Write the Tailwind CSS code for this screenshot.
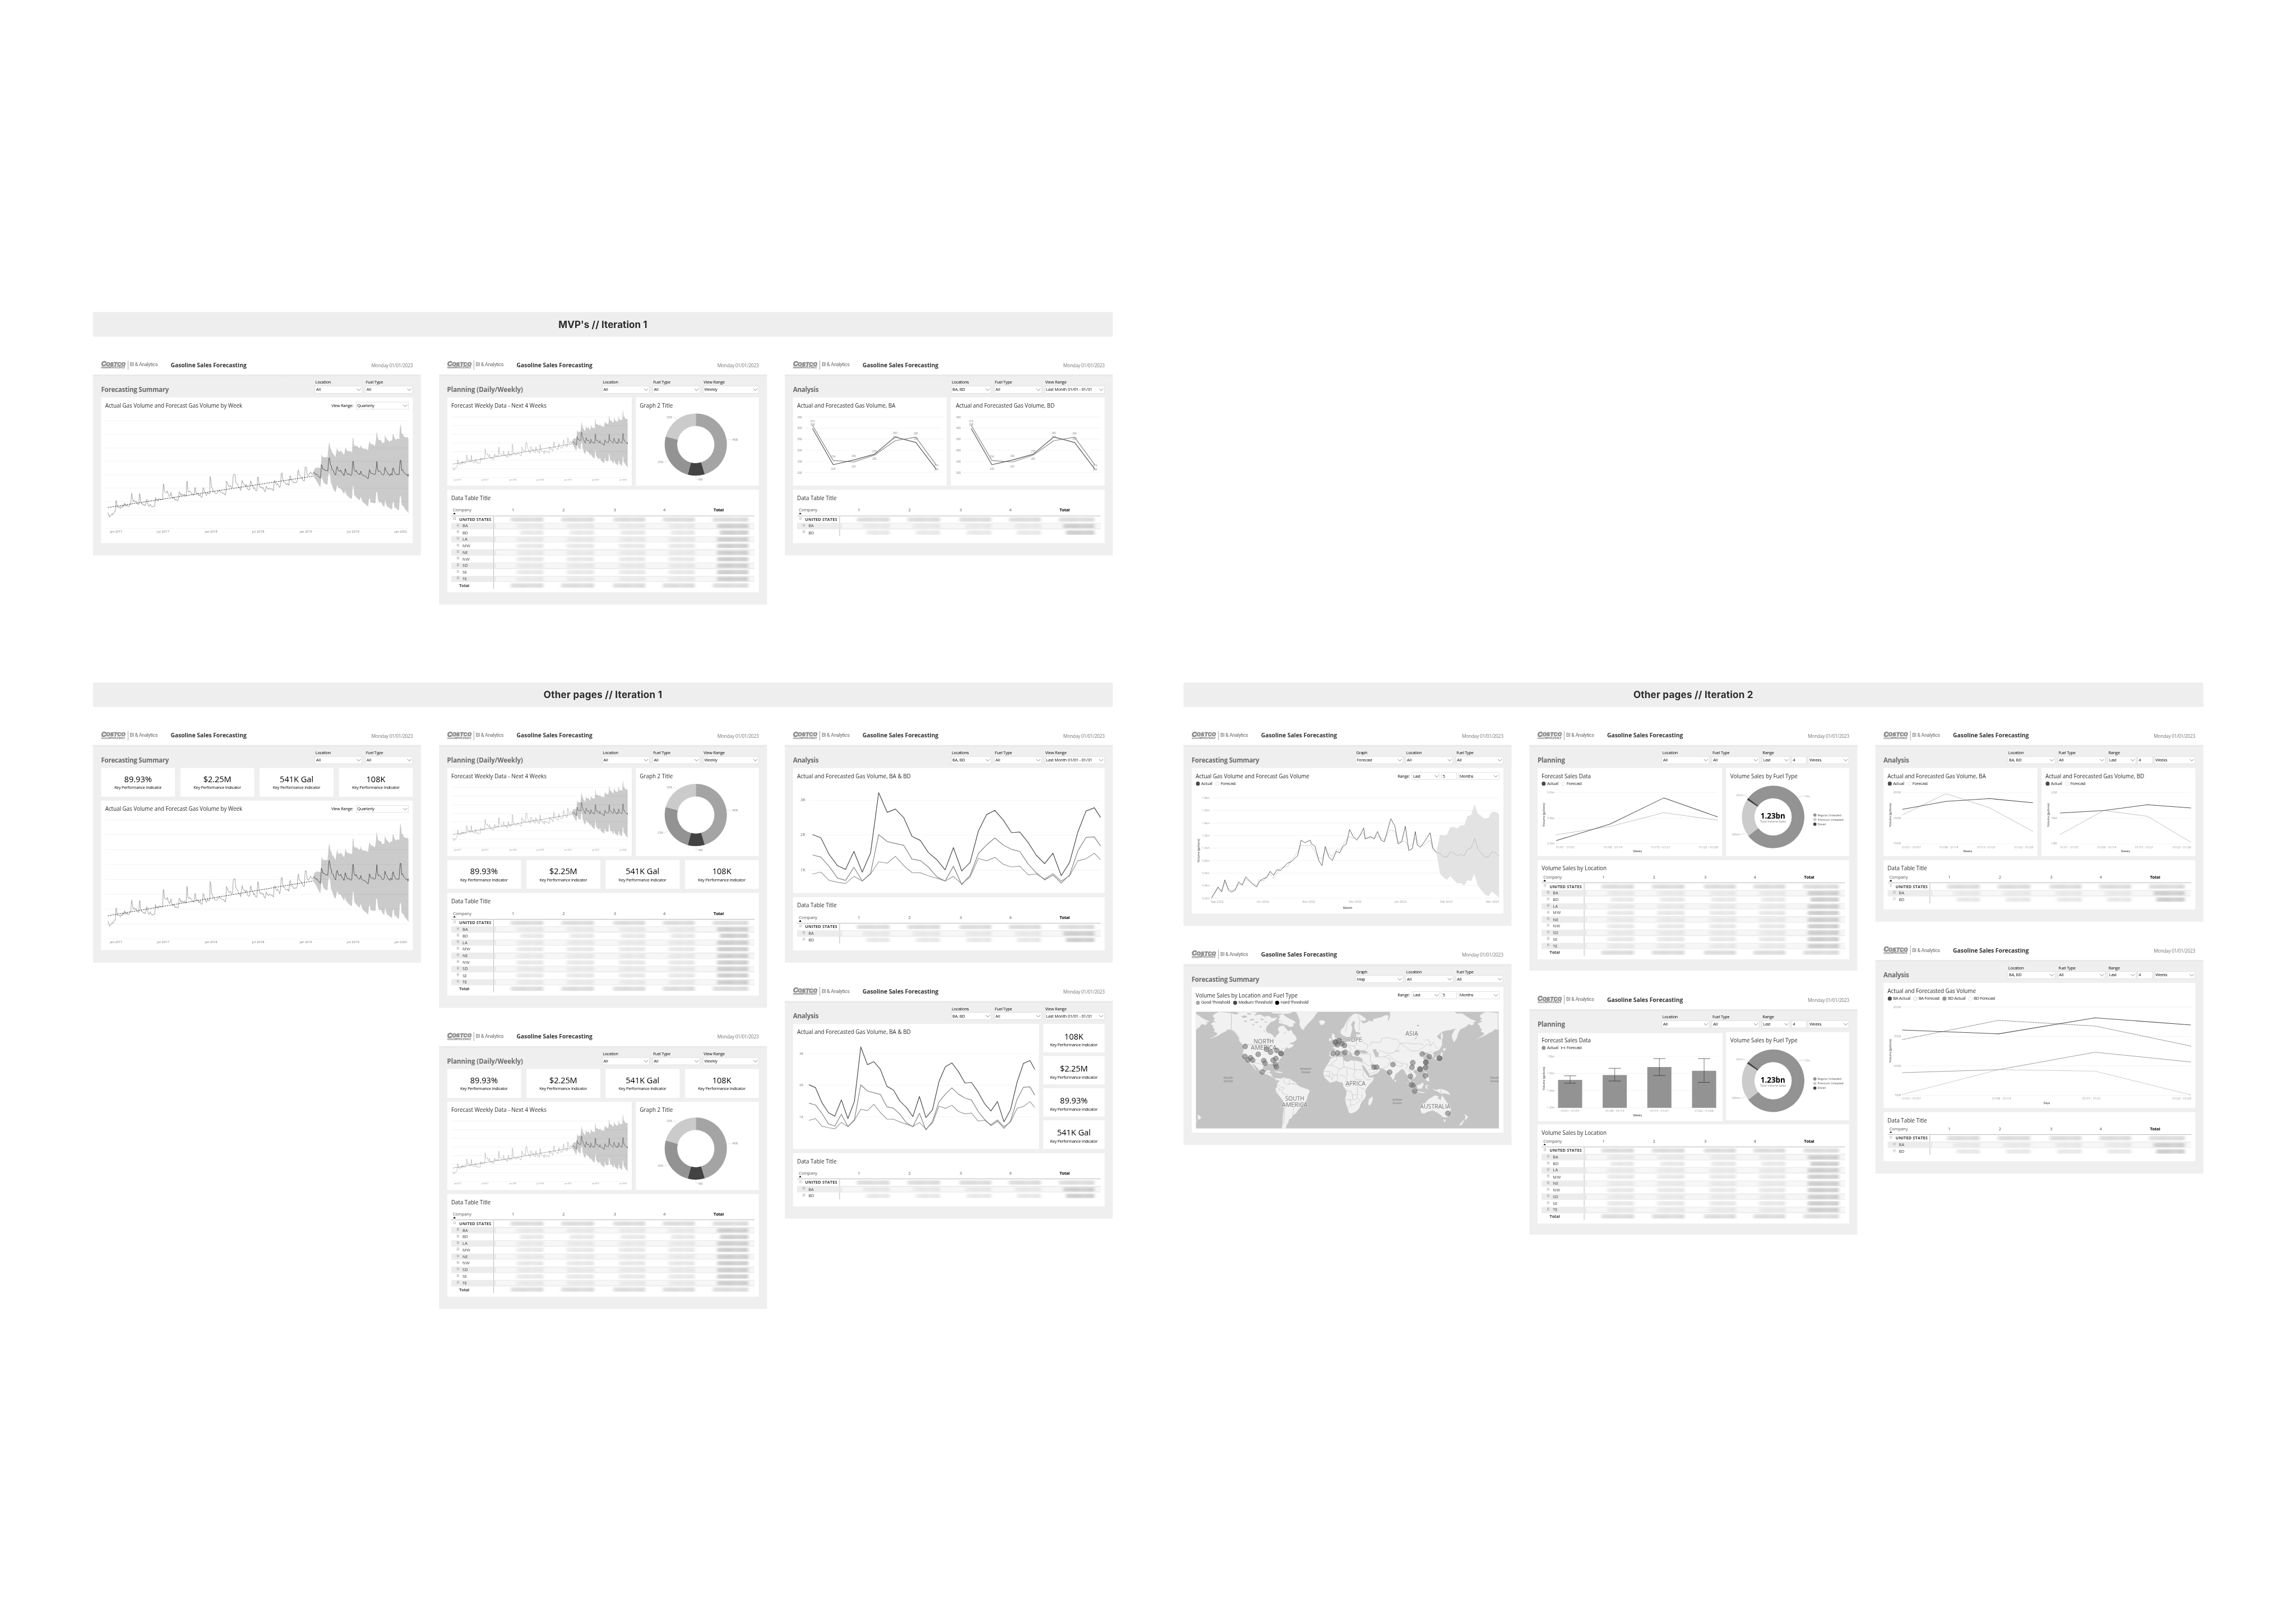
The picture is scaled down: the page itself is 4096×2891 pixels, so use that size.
<!DOCTYPE html>
<html lang="en">
<head>
<meta charset="utf-8">
<title>Gasoline Sales Forecasting – page iterations</title>
<script src="https://cdn.jsdelivr.net/npm/@tailwindcss/browser@4"></script>
</head>
<body class="bg-white">
<div class="w-[4096px] h-[2891px] overflow-hidden bg-white">
  <main id="board" class="w-[6720px] h-[4743px] origin-top-left scale-[0.609524] bg-white pt-[913px] pl-[272px] font-['Open_Sans','Noto_Sans',sans-serif] text-black"></main>
</div>
<script>
// Set widths (px) of the strings used across the pages
const W = {
  'BI & Analytics': 81.3, 'Gasoline Sales Forecasting': 222, 'Monday 01/01/2023': 121,
  'Forecasting Summary': 198, 'Planning (Daily/Weekly)': 222, 'Analysis': 74.5, 'Planning': 80,
  'Location': 45, 'Locations': 50, 'Fuel Type': 50, 'View Range': 62, 'Graph': 32, 'Range': 33.5, 'Range:': 35.6, 'View Range:': 64,
  'All': 13.5, 'Weekly': 38, 'Quarterly': 50, 'BA, BD': 36.5, 'Last Month 01/01 - 01/31': 135, 'Forecast': 44, 'Map': 24, 'Last': 21, 'Months': 40.5, 'Weeks': 34.5,
  'Actual Gas Volume and Forecast Gas Volume by Week': 401, 'Forecast Weekly Data - Next 4 Weeks': 279, 'Graph 2 Title': 96.5, 'Data Table Title': 115.5,
  'Actual and Forecasted Gas Volume, BA': 287.5, 'Actual and Forecasted Gas Volume, BD': 289, 'Actual and Forecasted Gas Volume, BA & BD': 332.5,
  'Actual Gas Volume and Forecast Gas Volume': 332.5, 'Volume Sales by Location and Fuel Type': 298.5, 'Forecast Sales Data': 144,
  'Volume Sales by Fuel Type': 197, 'Volume Sales by Location': 190, 'Actual and Forecasted Gas Volume': 258.5,
  '108K': 55.5, '$2.25M': 81.5, '89.93%': 81, '541K Gal': 98.5, 'Key Performance Indicator': 139,
  'Actual': 32.5, 'Good Threshold': 84.5, 'Medium Threshold': 99, 'Hard Threshold': 81, 'BA Actual': 50.5, 'BA Forecast': 61, 'BD Actual': 51, 'BD Forecast': 62.5,
  'Company': 54, 'UNITED STATES': 94, 'Total': 29.5, 'BA': 16, 'BD': 16, 'LA': 15, 'MW': 23.5, 'NE': 16, 'NW': 21.5, 'SD': 16, 'SE': 13.5, 'TE': 13.5,
  'Other pages // Iteration 1': 347, 'Other pages // Iteration 2': 351, "MVP's // Iteration 1": 260
};
const esc = s => s.replace(/&/g, '&amp;');
const t = (s, cls = '') => `<span class="inline-block whitespace-nowrap ${cls}" ${W[s] ? `data-w="${W[s]}"` : ''}>${esc(s)}</span>`;

/* ---------- header ---------- */
const logo = `<svg width="72" height="22" viewBox="0 0 72 22" class="overflow-visible fill-[#8c8c8c] font-['Inter'] font-black italic">
  <text x="0" y="14.2" font-size="18.5" textLength="15" lengthAdjust="spacingAndGlyphs" stroke="#8c8c8c" stroke-width=".8">C</text>
  <text x="14" y="13.8" font-size="14.5" textLength="57" lengthAdjust="spacingAndGlyphs" stroke="#8c8c8c" stroke-width=".8">OSTCO</text>
  <path d="M0 15.4H23.5V16.6H0zM0 17.6H22.7V18.8H0zM0 19.8H22V21H0z"/>
  <text x="22" y="21" font-size="7.2" textLength="48" lengthAdjust="spacingAndGlyphs">WHOLESALE</text></svg>`;
const header = `<header class="flex h-[56px] items-center pl-[24px] pr-[24px]">${logo}
  <div class="ml-[6px] h-[27px] w-px bg-[#666]"></div>
  <div class="ml-[5px] w-[119.5px] font-['Roboto'] text-[14.5px] text-[#666]">${t('BI & Analytics')}</div>
  <div class="text-[17px] font-bold text-[#333]">${t('Gasoline Sales Forecasting')}</div>
  <div class="ml-auto pt-[2px] text-[14px] text-[#7a7a7a]">${t('Monday 01/01/2023')}</div></header>`;

/* ---------- form controls ---------- */
const chev = `<svg width="14" height="8" viewBox="0 0 14 8" class="ml-auto mr-[2px] shrink-0 fill-none stroke-[#333]"><path d="M1 1 7 7 13 1"/></svg>`;
const WD = { 139: 'w-[139px]', 117: 'w-[117.5px]', 163: 'w-[163px]', 175: 'w-[175.5px]', 82: 'w-[82.5px]', 45: 'w-[45px]', 120: 'w-[120px]', 154: 'w-[154.5px]' };
const sel = (v, w, arrow = true) => `<div class="flex h-[22px] items-center border border-[#cfcfcf] bg-white pl-[3px] text-[12px] ${WD[w]}">${t(v)}${arrow ? chev : ''}</div>`;
const field = (label, box) => `<div class="flex flex-col"><div class="h-[21px] pl-[2px] text-[12px] leading-[21px]">${t(label)}</div>${box}</div>`;
const range = (n, unit) => `<div class="flex gap-[4px]">${sel('Last', 82)}${sel(n, 45, false)}${sel(unit, 120)}</div>`;
const bar = (title, fields, gap = 'gap-[8.7px]') => `<div class="flex h-[67px] items-start"><h2 class="pt-[29px] text-[19px] leading-[30px] font-bold text-[#6a6a6a]">${t(title)}</h2>
  <div class="ml-auto flex pt-[12px] ${gap}">${fields.join('')}</div></div>`;

const card = (h, inner, mt = '') => `<article class="${mt} shrink-0">${header}<div class="${h} bg-[linear-gradient(#e7e7e7,#efefef_8px)] px-[24px]">${inner}</div></article>`;
const panel = (size, title, inner, right = '', legend = '') => `<section class="${size} shrink-0 bg-white px-[12px]"><div class="flex h-[35.5px] items-center justify-between pt-[13px]"><h3 class="text-[16.2px] leading-[22px] text-[#2b2b2b] font-medium">${t(title)}</h3>${right}</div>${legend}${inner}</section>`;

/* ---------- KPI ---------- */
const kpi = (v, size = 'h-[84px] flex-1') => `<div class="${size} flex flex-col items-center bg-white pt-[15px]"><div class="text-[24px] leading-[33px]">${t(v)}</div><div class="text-[12px] leading-[19px]">${t('Key Performance Indicator')}</div></div>`;
const kpis = `<div class="flex gap-[16px]">${['89.93%', '$2.25M', '541K Gal', '108K'].map(v => kpi(v)).join('')}</div>`;

/* ---------- legends ---------- */
const mark = { dark: '<circle cx="6" cy="6" r="6" class="fill-[#4a4a4a]"/>', mid: '<circle cx="6" cy="6" r="6" class="fill-[#939393]"/>', light: '<circle cx="6" cy="6" r="6" class="fill-[#a8a8a8]"/>', black: '<circle cx="6" cy="6" r="6"/>',
  dot: '<circle cx="6" cy="6" r="5.4" stroke-dasharray="2.1 2.1" class="fill-none stroke-[#8c8c8c]"/>', ddot: '<circle cx="6" cy="6" r="5.4" stroke-dasharray="2.1 2.1" class="fill-none stroke-[#333]"/>', err: '<path d="M1 2V10M11 2V10M1 6H11" class="fill-none stroke-black"/>' };
const legend = items => `<div class="flex h-[21px] items-center gap-[8.5px] text-[12.5px] text-[#222]">${items.map(([m, s]) => `<div class="flex items-center gap-[4px]"><svg width="12" height="12" viewBox="0 0 12 12">${mark[m]}</svg>${t(s)}</div>`).join('')}</div>`;

/* ---------- charts ---------- */
// A plot maps sample coordinates to local pixels: (v - origin) / factor
function plot(w, h, ox, oy, ky, kx = 1.6) {
  const X = x => +((x - ox) / kx).toFixed(2), Y = y => +((y - oy) / ky).toFixed(2), out = [];
  const P = s => s.trim().split(/\s+/).map(p => { const [x, y] = p.split(','); return X(+x) + ',' + Y(+y); }).join(' ');
  const o = {
    line(s, cls, dash) { out.push(`<polyline points="${P(s)}" class="fill-none ${cls}" ${dash ? `stroke-dasharray="${dash}"` : ''} stroke-linejoin="round"/>`); return o; },
    area(s, cls) { out.push(`<polygon points="${P(s)}" class="${cls}"/>`); return o; },
    rect(x, y, x2, y2, cls) { out.push(`<rect x="${X(x)}" y="${Y(y)}" width="${(x2 - x) / kx}" height="${(y2 - y) / ky}" class="${cls}"/>`); return o; },
    grid(ys, a, b) { ys.forEach(y => o.line(`${a},${y} ${b},${y}`, 'stroke-[#efefef] [stroke-width:1.2px]')); return o; },
    circ(x, y, r, cls) { out.push(`<circle cx="${X(x)}" cy="${Y(y)}" r="${r}" class="${cls}"/>`); return o; },
    text(x, y, s, len, cls = 'fill-[#9a9a9a] text-[9px]', anchor = 'middle', rot = 0) {
      out.push(`<text x="${X(x)}" y="${Y(y)}" dy=".36em" text-anchor="${anchor}" ${len ? `textLength="${len}" lengthAdjust="spacingAndGlyphs"` : ''} ${rot ? `transform="rotate(-90 ${X(x)} ${Y(y)})"` : ''} class="${cls}">${s}</text>`); return o;
    },
    raw(s) { out.push(s); return o; }, X, Y,
    svg: (cls = 'overflow-visible') => `<svg width="${w}" height="${h}" viewBox="0 0 ${w} ${h}" class="block ${cls}">${out.join('')}</svg>`
  };
  return o;
}

const hist = '90,1287 92,1300 94,1300 97,1316 101,1306 106,1304 109,1294 112,1300 118,1288 121,1282 124,1280 126,1240 127,1213 130,1214 133,1252 138,1255 143,1252 148,1262 152,1250 157,1255 160,1240 164,1250 167,1228 171,1236 175,1248 178,1240 183,1248 189,1248 193,1234 196,1235 201,1166 204,1190 208,1218 213,1210 218,1222 222,1216 228,1233 234,1236 237,1172 240,1172 242,1215 247,1232 251,1232 255,1240 260,1238 264,1245 267,1232 270,1205 274,1210 278,1243 283,1248 288,1235 293,1247 298,1253 304,1247 309,1247 312,1192 315,1206 320,1206 324,1214 330,1200 336,1206 346,1205 349,1108 351,1108 354,1152 359,1162 364,1163 368,1152 372,1172 377,1186 382,1180 385,1160 389,1190 394,1200 398,1190 404,1210 409,1203 415,1213 419,1210 423,1160 426,1158 431,1180 436,1170 441,1180 448,1172 453,1184 456,1184 459,1091 461,1091 464,1152 468,1158 473,1152 478,1160 484,1170 489,1178 494,1175 497,1130 499,1132 502,1160 506,1170 511,1165 516,1183 521,1172 526,1190 531,1190 535,1132 538,1132 542,1160 547,1170 551,1180 555,1162 560,1170 566,1170 568,1060 572,1085 575,1130 579,1135 582,1150 587,1155 590,1166 600,1167 606,1155 612,1145 616,1158 622,1160 627,1166 632,1165 639,1178 642,1160 645,1090 650,1105 654,1118 658,1125 664,1118 668,1130 673,1130 676,1060 679,1047 685,1047 688,1095 692,1102 697,1112 702,1130 706,1130 711,1148 714,1125 718,1085 722,1102 727,1110 733,1122 737,1110 742,1135 748,1145 753,1145 757,1088 760,1092 764,1118 768,1118 772,1138 776,1130 781,1148 787,1150 791,1064 794,1066 798,1115 803,1130 808,1125 813,1135 817,1130 822,1152 827,1155 831,1122 836,1135 842,1142 846,1132 852,1140 857,1138 865,1150 868,1090 871,1086 875,1105 881,1112 884,1105 889,1118 894,1130 898,1110 901,1045 905,1038 908,1075 912,1094 917,1095 922,1105 926,1112 932,1105 937,1117 941,1060 944,1056 948,1080 952,1090 956,1092 960,1102 965,1098 972,1100 976,1090 979,1030 982,1020 985,1050 990,1058 996,1065 1001,1080 1005,1089 1010,1089 1013,1002 1019,1003 1022,1045 1027,1055 1032,1048 1039,1032 1044,1045 1049,1047 1054,1032';
const fcst = '1054,1032 1057,1040 1062,1047 1067,1045 1072,1056 1078,1062 1084,1072 1087,1040 1089,986 1093,996 1096,1015 1102,1015 1108,1025 1114,1022 1119,1027 1121,1000 1123,960 1126,942 1129,960 1132,988 1136,992 1138,1016 1145,1022 1149,1040 1156,1052 1159,1018 1163,998 1166,1012 1170,1026 1176,1028 1180,1020 1185,1038 1190,1042 1195,1056 1198,1040 1201,1012 1205,1028 1209,1042 1214,1048 1218,1042 1222,1050 1228,1055 1232,1045 1236,966 1239,966 1242,1015 1248,1030 1252,1022 1257,1038 1263,1045 1269,1048 1274,1027 1278,1048 1285,1055 1292,1058 1299,1062 1304,1072 1309,1073 1312,1040 1315,1018 1319,1038 1325,1042 1331,1042 1336,1048 1342,1045 1346,1010 1349,966 1352,1010 1356,1030 1361,1025 1366,1032 1372,1045 1377,1052 1383,1045 1387,1003 1391,1022 1396,1030 1401,1045 1406,1048 1410,1056 1414,1042 1420,1052 1423,1010 1426,1006 1430,1030 1435,1042 1440,1048 1447,1048 1453,1048 1456,990 1459,957 1462,960 1465,1022 1470,1018 1474,1035 1481,1042 1487,1050 1492,1048 1495,1060 1497,1045';
const band = '1052,1040 1056,1015 1062,1008 1070,1004 1078,1006 1086,1008 1088,970 1090,920 1094,935 1102,940 1110,940 1118,938 1121,900 1124,855 1127,848 1131,885 1136,892 1140,912 1147,920 1155,940 1159,905 1163,882 1168,903 1176,905 1181,897 1186,908 1196,925 1199,900 1202,877 1208,895 1216,902 1224,902 1233,906 1236,820 1239,816 1242,860 1248,870 1256,868 1262,878 1270,882 1274,860 1278,882 1288,886 1300,888 1308,895 1311,860 1315,838 1320,855 1328,858 1340,868 1345,830 1348,775 1351,800 1355,826 1362,832 1368,832 1374,850 1384,846 1387,800 1392,820 1400,832 1410,844 1413,832 1420,838 1423,800 1426,790 1430,815 1438,830 1446,822 1454,826 1457,750 1460,730 1463,760 1465,795 1470,790 1475,808 1484,815 1490,815 1494,815 1497,825 1497,1292 1490,1278 1480,1265 1472,1245 1465,1240 1462,1190 1459,1180 1456,1200 1453,1272 1445,1270 1438,1255 1432,1262 1428,1220 1424,1222 1420,1270 1412,1262 1404,1255 1397,1248 1392,1235 1388,1206 1384,1252 1376,1242 1368,1220 1360,1225 1354,1205 1350,1158 1346,1160 1343,1225 1335,1230 1328,1225 1320,1225 1315,1195 1312,1205 1308,1250 1300,1240 1290,1230 1280,1215 1274,1188 1268,1210 1258,1200 1248,1185 1243,1175 1240,1125 1237,1118 1232,1202 1222,1195 1210,1180 1204,1170 1200,1150 1195,1172 1186,1150 1178,1135 1170,1135 1163,1115 1156,1160 1148,1148 1140,1120 1134,1100 1130,1055 1126,1038 1121,1060 1118,1112 1108,1108 1100,1100 1095,1080 1090,1062 1087,1100 1084,1130 1075,1110 1065,1085 1056,1068 1052,1045';
const levels = [711, 796, 881, 965, 1050, 1134, 1219, 1303, 1388];
// top and bottom: local y of the first and last gridline
function weekly(w, h, top, bottom, small) {
  const ky = 677 / (bottom - top), kx = 1420 / w;
  const c = plot(w, h, 77, 711 - top * ky, ky, kx);
  c.area(band, 'fill-[#cbcbcb]');
  levels.slice(small ? 1 : 0).forEach(y => c.line(`77,${y} 1497,${y}`, 'stroke-black/7 [stroke-width:1.2px]'));
  c.line(hist, small ? 'stroke-[#a2a2a2] [stroke-width:1px]' : 'stroke-[#a6a6a6] [stroke-width:1.7px]');
  c.line('89,1256 1054,1058', small ? 'stroke-[#333] [stroke-width:1px]' : 'stroke-[#333] [stroke-width:1.5px]', small ? '2.4 1.4' : '4.6 2.4');
  c.line(fcst, small ? 'stroke-[#333] [stroke-width:.9px]' : 'stroke-[#222] [stroke-width:1.1px]');
  ['jan 2017', 'jul 2017', 'jan 2018', 'jul 2018', 'jan 2019', 'jul 2019', 'jan 2020'].forEach((s, i) =>
    c.text([128, 348, 573, 793, 1017, 1238, 1461][i], 1388 + (small ? 6 : 9.3) * ky, s, small ? 21 : 36, small ? 'fill-[#8a8a8a] text-[5.4px]' : 'fill-[#777] text-[9px]'));
  return c.svg();
}

function arc(cx, cy, R, r, a, b, cls) {
  const p = (q, d) => { const k = d * Math.PI / 180; return (cx + q * Math.sin(k)).toFixed(2) + ' ' + (cy - q * Math.cos(k)).toFixed(2); };
  const L = b - a > 180 ? 1 : 0;
  return `<path d="M${p(R, a)}A${R} ${R} 0 ${L} 1 ${p(R, b)}L${p(r, b)}A${r} ${r} 0 ${L} 0 ${p(r, a)}Z" class="${cls}"/>`;
}
const donutA = (() => {
  const c = plot(336, 222, 955, 352.2, 2.0907), cx = c.X(1216.5), cy = c.Y(565), ld = 'stroke-[#bbb] [stroke-width:.8px]', tx = "fill-[#8c8c8c] text-[8px] font-['Roboto']";
  c.raw(arc(cx, cy, 91, 54.4, 0, 163.3, 'fill-[#a4a4a4]') + arc(cx, cy, 91, 54.4, 163.3, 195, 'fill-[#434343]') + arc(cx, cy, 91, 54.4, 195, 285, 'fill-[#939393]') + arc(cx, cy, 91, 54.4, 285, 360, 'fill-[#cbcbcb]'));
  c.line('1362,537 1372,535 1386,535', ld).line('1110,397 1117,397 1126,411', ld).line('1068,672 1077,669 1088,661', ld).line('1218,760 1218,778 1226,778', ld);
  c.text(1401, 535, '490K', 16.5, tx).text(1093, 397, '225K', 16.5, tx).text(1051, 672, '270K', 16.5, tx).text(1239, 779, '95K', 13.5, tx);
  return c.svg();
})();
const donutB = (() => {
  const c = plot(336, 222, 958, 354.3, 2.1778), cx = c.X(1159), cy = c.Y(588), ld = 'stroke-[#aaa] [stroke-width:.9px]', tx = 'fill-[#9a9a9a] text-[8.4px]';
  c.raw(arc(cx, cy, 91.5, 54.4, -52.8, 232.8, 'fill-[#939393]') + arc(cx, cy, 91.5, 54.4, 232.8, 303.4, 'fill-[#cbcbcb]') + arc(cx, cy, 91.5, 54.4, 303.4, 307.2, 'fill-[#434343]'));
  c.line('1276,464 1288,457 1299,457', ld).line('1022,451 1030,452 1040,465', ld).line('1007,699 1015,699 1027,690', ld);
  c.text(1316, 457, '1.3bn', 18.5, tx).text(1003, 451, '20mm', 21, tx).text(985, 699, '328mm', 25, tx);
  c.text(1158, 583, '1.23bn', 72, 'fill-black text-[22px] font-bold').text(1158, 618, 'Total Volume Sales', 76, 'fill-[#777] text-[9px]');
  [['Regular Unleaded', 69.5, 576, 'fill-[#939393]'], ['Premium Unleaded', 76, 605, 'fill-[#cbcbcb]'], ['Diesel', 24, 634.5, 'fill-[#434343]']].forEach(([s, w, y, f]) =>
    c.circ(1354.5, y, 4.7, f).text(1367, y, s, w, 'fill-[#555] text-[9px]', 'start'));
  return c.svg();
})();

const analysisPair = side => {
  const d = side ? 743 : 0, c = plot(426, 222, side ? 811 : 68, 440.8, 2.6133), y = v => 920 - (v - 200) * 1.696, tx = "fill-[#8a8a8a] text-[9px] font-['Roboto']";
  c.grid([496, 581, 666, 750, 835, 920], 101 + d, 749 + d);
  [450, 400, 350, 300, 250, 200].forEach(v => c.text(91 + d, y(v), v, 13.5, tx, 'end'));
  const xs = [140, 237, 333, 430, 527, 624, 720];
  const ln = a => a.map((v, i) => `${xs[i] + d},${y(v)}`).join(' ');
  c.line(ln([413, 254, 247, 278, 343, 359, 233]), 'stroke-[#8a8a8a] [stroke-width:2px]').line(ln([398, 235, 256, 282, 360, 335, 214]), 'stroke-[#555] [stroke-width:2px]');
  [[140, 528, 413], [140, 554, 398], [237, 798, 254], [237, 893, 235], [333, 793, 256], [333, 873, 247], [430, 757, 278], [430, 814, 282], [527, 618, 360], [527, 646, 343], [624, 620, 359], [624, 661, 335], [720, 865, 214], [720, 895, 233]]
    .forEach(([x, yy, v]) => c.text(x + d, yy, v, 12.5, tx));
  return c.svg();
};

const L1 = '140,720 179,740 218,850 257,923 295,948 334,830 373,966 412,840 450,445 490,574 528,552 567,608 606,731 645,758 683,838 722,884 761,951 800,805 839,958 878,902 917,696 955,589 994,561 1033,624 1072,707 1111,703 1150,772 1188,855 1227,910 1266,842 1305,989 1344,902 1383,702 1421,565 1460,544 1489,607';
const L2 = '140,853 179,867 218,928 257,1004 295,1020 334,934 373,1024 412,974 450,720 490,765 528,778 567,790 606,880 645,890 683,933 722,996 761,1024 800,927 839,1048 878,986 917,844 955,788 994,742 1033,788 1072,816 1111,831 1150,912 1188,970 1227,1017 1266,985 1305,1037 1344,984 1383,826 1421,738 1460,735 1489,795';
const L3 = '140,979 179,965 218,1020 257,1032 295,1040 334,993 373,1024 412,978 450,898 490,907 528,862 567,922 606,969 645,970 683,990 722,1006 761,1024 800,994 839,1042 878,998 917,875 955,892 994,869 1033,914 1072,932 1111,926 1150,984 1188,978 1227,1010 1266,975 1305,1024 1344,990 1383,891 1421,878 1460,842 1489,885';
const waves = (w, ox, oy, ky, kx) => {
  const c = plot(w, 330, ox, oy, ky, kx);
  c.grid([495, 723, 953], 125, 1489);
  ['3K', '2K', '1K'].forEach((s, i) => c.text(95, [494, 722, 953][i], s, kx > 1.7 ? 11.5 : 14.5, kx > 1.7 ? 'fill-[#666] text-[9px]' : 'fill-[#666] text-[11px]'));
  return c.line(L3, 'stroke-[#9a9a9a] [stroke-width:2px]').line(L2, 'stroke-[#858585] [stroke-width:2px]').line(L1, 'stroke-[#4a4a4a] [stroke-width:2px]').svg();
};

const DARK = 'stroke-[#4f4f4f] [stroke-width:1.7px]', DOT = 'stroke-[#8c8c8c] [stroke-width:1.6px]', AX = 'fill-[#222] text-[9px]';
const volume = (c, x, y) => c.text(x, y, 'Volume (gallons)', 68.5, AX, 'middle', 1);
const DAYS = ['01/01 - 01/07', '01/08 - 01/14', '01/15 - 01/21', '01/22 - 01/28'];

const forecastBig = (() => {
  const c = plot(888, 365, 79, 487.7, 2.6576);
  c.grid([570, 668, 765, 862, 960, 1057, 1154, 1252, 1349], 149, 1499);
  c.area('1206,994 1222,856 1238,861 1255,856 1270,797 1288,797 1303,806 1320,783 1336,783 1350,712 1368,702 1384,618 1399,689 1431,730 1450,723 1464,678 1483,678 1499,694 1499,1345 1483,1320 1464,1297 1450,1334 1432,1320 1399,1250 1383,1160 1368,1217 1351,1208 1336,1250 1320,1233 1303,1233 1288,1208 1270,1177 1255,1207 1238,1187 1222,1158', 'fill-[#e3e3e3]');
  c.line('152,1349 183,1270 200,1287 215,1225 232,1275 245,1290 263,1278 280,1240 296,1240 313,1202 330,1217 345,1232 364,1250 375,1205 397,1215 408,1175 427,1158 443,1196 459,1155 476,1112 510,1103 524,1055 556,990 572,936 589,941 617,936 637,990 655,1042 670,1042 685,972 702,1005 718,1023 737,971 753,972 768,938 784,892 799,872 816,882 833,882 849,858 865,840 872,878 897,882 914,878 930,870 947,883 962,892 988,820 1011,828 1026,910 1043,912 1058,903 1076,950 1093,930 1107,882 1131,938 1147,938 1176,898 1189,972 1206,994 1222,1000 1238,1028 1256,1028 1270,988 1288,998 1303,1020 1320,1008 1336,1020 1349,972 1368,960 1385,883 1400,967 1431,1028 1450,1028 1466,987 1483,998 1499,1021', 'stroke-[#909090] [stroke-width:1.4px]', '2.2 2.2');
  c.line('152,1349 183,1262 200,1301 215,1206 232,1286 245,1301 263,1287 280,1222 296,1248 313,1183 345,1240 364,1262 378,1217 394,1198 411,1189 427,1140 443,1171 459,1128 476,1133 508,1077 524,1068 556,1018 572,898 589,917 615,898 620,926 637,945 655,1057 670,1096 685,947 702,1030 718,1056 737,984 753,996 768,947 784,927 799,815 816,870 833,898 849,858 865,803 872,889 897,870 914,888 930,830 947,899 962,910 992,731 1011,788 1026,927 1043,910 1060,790 1076,978 1093,963 1107,831 1116,936 1131,952 1147,917 1176,840 1189,959 1206,994', 'stroke-[#555] [stroke-width:1.5px]');
  ['1.8bn', '1.6bn', '1.4bn', '1.2bn', '1.0bn', '0.8bn', '0.6bn', '0.4bn', '0.2bn'].forEach((s, i) => c.text(143, 569 + 97.4 * i, s, 21.5, undefined, 'end'));
  ['Sep 2022', 'Oct 2022', 'Nov 2022', 'Dec 2022', 'Jan 2023', 'Feb 2023', 'Mar 2023'].forEach((s, i) => c.text([179, 393, 608.5, 825, 1038.5, 1252, 1468][i], 1376, s, [37, 36, 38, 37, 35, 36, 38][i]));
  c.text(790, 1424, 'Month', 27, 'fill-black text-[9px]');
  return volume(c, 91, 980).svg();
})();

const planLines = (() => {
  const c = plot(516, 200, 75, 400, 2.1778);
  c.grid([432, 596, 758], 142, 900).line('143,702 395,649 647,561 900,609', DOT, '2.6 2.2').line('143,739 395,634 647,467 900,588', DARK);
  ['0.6bn', '0.4bn', '0.2bn'].forEach((s, i) => c.text(136, [432, 595, 757][i], s, 22, undefined, 'end'));
  DAYS.forEach((s, i) => c.text([186, 409.5, 633.5, 856.5][i], 780, s, 54.5));
  return volume(c.text(524, 805, 'Weeks', 26.5, AX), 86, 575).svg();
})();
const planBars = (() => {
  const c = plot(516, 200, 75, 383.5, 2.1778);
  c.grid([416, 525, 634, 744], 142, 900);
  [[208.5, 566, 540, 587], [417.5, 535, 492, 573], [626.5, 484, 430, 538], [836, 508, 430, 582]].forEach(([x, top, a, b], i) => {
    c.rect(x - 56.5, top, x + 56.5, 744, 'fill-[#939393]');
    c.line(`${x},${a} ${x},${b}`, 'stroke-[#333] [stroke-width:1.1px]').line(`${x - 28.5},${a} ${x + 28.5},${a}`, 'stroke-[#222] [stroke-width:1.1px]').line(`${x - 28.5},${b} ${x + 28.5},${b}`, 'stroke-[#222] [stroke-width:1.1px]');
    c.text(x, 764, DAYS[i], 54.5);
  });
  ['1.8bn', '1.6bn', '1.4bn', '1.2bn'].forEach((s, i) => c.text(136, [416, 525, 633, 741][i], s, 22, undefined, 'end'));
  return volume(c.text(524, 790, 'Weeks', 26.5, AX), 86, 558).svg();
})();

const pair2 = (side) => {
  const d = side ? 739 : 0, c = plot(426, 200, 71 + d, 495.7, 2.7034);
  c.grid([536, 739, 942], 139 + d, 752 + d);
  if (side) c.line('878,868 1083,678 1287,724 1491,930', DOT, '2.6 2.2').line('878,698 1083,678 1287,633 1491,658', DARK);
  else c.line('139,714 344,545 548,657 751,844', DOT, '2.6 2.2').line('139,669 344,606 548,584 751,617', DARK);
  (side ? ['22M', '18M', '14M'] : ['200M', '150M', '100M']).forEach((s, i) => c.text((side ? 864 : 133), [536, 738, 940][i], s, side ? 17.5 : 22.5, undefined, 'end'));
  DAYS.forEach((s, i) => c.text([182, 358, 533.5, 709][i] + d, 968, s, 54.5));
  return volume(c.text(445.5 + d, 1000, 'Weeks', 26.5, AX), 83 + d, 715).svg();
};
const quad = (() => {
  const c = plot(888, 309, 71, 413.4, 2.2725);
  c.grid([447, 642, 837, 1034], 139, 1491);
  c.line('139,663 590,535 1042,573 1491,706', 'stroke-[#444] [stroke-width:1.6px]', '2.6 2.2').line('139,599 590,625 1042,518 1491,566', DARK);
  c.line('139,1028 590,863 1042,873 1491,1031', 'stroke-[#999] [stroke-width:1.5px]', '2.6 2.2').line('139,883 590,863 1042,747 1491,812', 'stroke-[#9a9a9a] [stroke-width:1.6px]');
  ['200M', '150M', '100M', '50M'].forEach((s, i) => c.text(133, [447, 642, 837, 1031][i], s, i == 3 ? 17.5 : 22.5, undefined, 'end'));
  DAYS.forEach((s, i) => c.text([182, 604, 1026, 1448][i], 1056, s, 54.5));
  return volume(c.text(816, 1084, 'Days', 19.5, AX), 83, 738).svg();
})();

/* ---------- world map ---------- */
const world = (() => {
  const c = plot(887.5, 342, 79, 530, 2.6576), land = 'fill-[#f1f1f1] stroke-[#dedede] [stroke-width:.6px]', sea = 'fill-[#c4c4c4]', bd = 'stroke-[#a9a9a9] [stroke-width:.8px]';
  c.rect(79, 530, 1499, 1439, sea);
  const chukotka = d => `${79 + d},545 ${92 + d},560 ${102 + d},572 ${118 + d},588 ${132 + d},598 ${143 + d},606 ${136 + d},612 ${124 + d},610 ${134 + d},622 ${122 + d},636 ${112 + d},626 ${100 + d},636 ${98 + d},650 ${86 + d},660 ${79 + d},680`;
  const alaska = d => `${158 + d},562 ${170 + d},545 ${188 + d},532 ${245 + d},541 ${245 + d},672 ${230 + d},668 ${216 + d},686 ${200 + d},698 ${188 + d},712 ${165 + d},730 ${140 + d},744 ${160 + d},728 ${180 + d},706 ${176 + d},694 ${164 + d},686 ${168 + d},668 ${158 + d},652 ${160 + d},640 ${148 + d},625 ${160 + d},614 ${172 + d},606 ${158 + d},598 ${170 + d},588 ${162 + d},576`;
  c.area(chukotka(0), land).area(alaska(0), land);
  c.area('245,541 262,552 282,546 268,532 330,530 366,536 352,560 380,552 400,570 420,562 436,580 460,575 450,600 430,612 418,632 409,650 407,675 414,694 428,700 440,712 444,728 452,732 456,715 466,704 470,690 463,668 468,648 480,640 494,642 500,660 512,682 526,672 534,700 546,720 552,745 540,765 528,770 516,780 538,786 532,804 512,818 506,806 496,822 490,842 486,862 480,886 470,905 462,928 466,955 462,968 455,948 440,936 415,938 398,946 392,972 396,994 405,1000 416,984 428,990 424,1008 434,1016 438,1034 446,1048 458,1048 474,1050 480,1062 470,1066 456,1062 444,1046 428,1032 412,1018 394,1010 380,996 370,972 356,948 348,938 346,946 360,980 364,992 352,972 342,948 330,926 316,910 304,882 299,858 302,828 303,800 292,776 282,756 280,734 268,706 258,686 245,672', land);
  c.area('466,560 486,548 500,568 520,588 538,600 548,620 534,622 538,642 520,650 504,634 486,628 480,606 464,590 474,576', land);
  c.area('430,532 470,532 530,530 524,542 500,548 470,546 440,544', land).area('470,600 486,612 480,624 466,618', land);
  ['290,566 310,560 322,572 302,580', '330,590 352,586 350,596 336,600', '300,604 316,598 318,612', '350,612 372,606 368,620', '380,580 398,590 388,600', '376,640 390,648 382,656', '398,672 404,690 396,684', '410,742 424,738 422,770 414,764', '430,822 452,815 446,826', '452,832 462,842 456,846', '322,540 340,546 334,554 318,550', '400,604 414,610 404,618', '342,626 356,630 346,638', '490,690 500,696 496,704', '430,560 446,552 452,566 438,572'].forEach(s => c.area(s, sea));
  c.area('548,530 652,530 640,552 632,575 618,600 602,628 590,650 583,674 572,660 564,630 566,600 556,560', land);
  c.area('655,608 666,596 678,600 686,612 676,630 664,634', land);
  c.area('446,995 470,996 488,1004 474,1008 456,1002', land);
  c.area('478,1050 490,1042 504,1050 520,1052 528,1064 545,1078 556,1100 566,1112 590,1126 610,1138 612,1154 604,1178 600,1206 592,1234 576,1248 570,1274 556,1298 548,1322 532,1336 528,1358 516,1366 512,1392 504,1412 500,1439 481,1439 486,1400 486,1350 490,1300 492,1252 486,1218 470,1186 455,1152 452,1130 460,1112 458,1092 470,1070', land);
  c.area('712,892 736,882 766,880 770,908 790,922 802,910 830,912 856,922 860,940 856,955 866,985 876,1010 890,1044 912,1042 908,1066 890,1100 878,1126 872,1150 876,1180 870,1206 858,1226 850,1252 844,1282 828,1308 806,1322 796,1316 790,1282 782,1244 778,1210 784,1172 784,1142 770,1112 768,1092 764,1080 748,1078 738,1068 708,1084 694,1062 680,1040 676,1010 680,984 692,948 704,918', land);
  c.area('906,1188 908,1212 900,1248 892,1262 886,1248 890,1212', land);
  c.area('705,876 706,842 728,840 733,824 718,808 740,800 754,784 772,770 790,758 788,740 798,734 802,752 820,756 800,735 780,722 764,712 756,694 758,672 772,650 784,610 800,570 822,545 842,548 862,568 878,588 868,604 848,596 862,622 884,612 884,600 908,606 910,588 950,572 962,560 990,556 986,535 1000,530 1290,530 1300,545 1328,545 1345,565 1366,588 1384,598 1392,608 1376,614 1384,624 1370,638 1358,626 1342,650 1318,668 1308,696 1302,735 1288,768 1280,742 1278,712 1288,680 1296,662 1272,672 1244,680 1228,692 1208,722 1218,742 1232,752 1232,790 1220,826 1198,842 1188,850 1194,876 1184,892 1176,876 1166,850 1156,846 1142,848 1136,860 1154,868 1142,892 1156,920 1150,948 1132,972 1112,984 1098,984 1104,1008 1112,1026 1104,1046 1094,1052 1084,1034 1078,1038 1082,1066 1094,1086 1100,1106 1086,1094 1078,1062 1070,1030 1062,1010 1054,984 1042,976 1030,996 1014,1016 1010,1040 1002,1062 992,1034 982,998 966,984 952,972 934,968 942,986 930,1008 896,1030 884,1030 870,985 856,948 860,922 858,896 846,882 822,878 812,874 806,850 794,838 784,824 780,830 800,856 792,868 776,838 764,832 752,840 740,862 730,882 716,886', land);
  c.area('802,746 800,734 806,702 812,660 806,628 818,600 824,612 820,648 828,688 850,694 848,704 830,706 832,736 820,750', sea);
  c.area('822,836 838,824 852,832 866,828 888,848 870,856 846,850 828,854', sea).area('906,826 924,820 926,842 936,850 934,884 920,882 914,856', sea).area('858,944 866,950 880,985 894,1026 888,1038 872,1002', sea).area('896,936 908,940 918,962 930,968 920,976 904,958', sea);
  c.area('1112,640 1122,630 1126,640 1118,646', sea).area('1006,838 1022,834 1036,828 1026,842', sea).area('974,545 990,560 982,600 978,596 982,566', sea).area('1110,730 1116,700 1112,738 1100,752', sea);
  c.area('716,700 728,706 730,730 742,752 738,768 720,776 724,756 716,736', land).area('702,742 712,734 714,752 706,764', land);
  c.area('1230,690 1236,712 1234,744 1228,752 1226,716', land).area('1236,820 1250,812 1246,836 1236,830', land).area('1230,842 1236,852 1232,878 1216,892 1200,900 1194,908 1200,888 1222,872', land);
  c.area('1068,1078 1084,1098 1104,1124 1110,1144 1098,1136 1080,1110', land).area('1104,1148 1130,1152 1152,1158 1148,1164 1112,1156', land).area('1114,1104 1130,1096 1142,1080 1146,1098 1136,1130 1118,1128', land).area('1154,1104 1172,1100 1160,1110 1166,1134 1156,1126', land);
  c.area('1188,1128 1202,1140 1224,1130 1252,1144 1262,1156 1272,1178 1246,1166 1226,1168 1212,1152 1196,1142', land).area('1150,998 1162,1004 1160,1026 1172,1050 1172,1074 1158,1066 1152,1030', land).area('1010,1058 1018,1066 1014,1078 1009,1070', land).area('1144,976 1150,974 1146,990', land);
  c.area('1128,1272 1134,1252 1154,1240 1166,1214 1184,1196 1198,1182 1216,1188 1212,1204 1226,1218 1230,1180 1240,1198 1254,1236 1270,1262 1274,1290 1264,1326 1256,1352 1236,1350 1224,1332 1214,1318 1204,1312 1190,1298 1166,1308 1150,1322 1136,1320', land).area('1238,1370 1250,1372 1244,1392', land);
  c.area('1336,1326 1354,1348 1346,1368 1338,1368 1342,1350', land).area('1338,1372 1322,1414 1312,1410 1330,1378', land).area('88,1330 104,1350 98,1368 88,1366', land).area('86,1372 79,1392 79,1380', land);
  c.area(alaska(1250).replace('1495,541', '1499,541').replace('1495,672', '1499,672'), land);
  ['245,541 245,672 262,686 274,712 282,740', '305,787 406,787 430,800 452,815 470,838 490,812', '318,910 344,914 362,930 384,936 394,950', '412,1002 424,1008', '428,1026 440,1030', '1494,541 1494,672',
    '458,1092 478,1118 492,1122 482,1150 486,1168 510,1180 530,1226 548,1250 536,1290 534,1330', '462,1122 476,1136 464,1148', '490,1050 492,1080 508,1096 530,1090 556,1100', '500,1250 494,1300 492,1400', '516,1060 518,1096', '540,1078 536,1096',
    '770,910 772,958 822,982 866,982', '822,914 822,982', '736,884 742,900 716,930 716,946 752,976 776,962', '692,948 716,948', '716,992 718,1022 740,1022 752,976', '680,994 706,994 706,1030 678,1030', '696,1034 712,1040 716,1060', '716,1060 724,1028', '740,1022 744,1048 742,1070', '752,1022 780,1036 786,1060 774,1080', '786,976 788,1036', '826,984 816,1030 830,1060 856,1060', '866,985 862,1030 880,1060 900,1060', '780,1110 800,1110 812,1060', '784,1148 806,1148 812,1176 836,1176', '836,1176 836,1118 846,1100', '846,1120 872,1136', '840,1176 830,1210 808,1216 780,1214', '802,1216 804,1262 792,1280', '836,1204 852,1222', '804,1262 826,1250 848,1222', '856,1170 858,1206', '812,1176 812,1210',
    '862,924 888,950 900,948', '886,984 932,968', '884,1014 912,1004 928,992', '896,860 896,910 912,950', '934,884 962,880 990,900 980,950 956,970', '962,880 984,868 990,880', '896,794 902,768 944,768 950,738 978,730 1002,744 1020,742 1036,778 1022,820 1008,850 984,856 960,846 934,830', '1036,778 1060,800 1084,836 1120,836 1146,808 1160,784 1180,796 1190,770 1200,792 1208,820', '1036,778 1060,772 1100,782 1128,776 1146,790', '1150,752 1168,748 1180,796', '990,880 1010,910 1046,934 1044,958 1020,950 998,930', '1046,934 1072,940 1062,980', '1082,960 1076,990 1090,1006 1084,1030', '1090,980 1104,1010', '1172,850 1186,836',
    '808,560 788,620 780,690', '838,548 846,600 844,680', '826,690 846,700 836,720', '828,756 834,780 820,800 790,790', '780,756 784,790 766,816', '734,830 752,834', '714,848 712,876', '790,800 806,816 800,846', '820,800 830,824', '852,720 862,770 886,790 880,820', '786,860 846,858 898,862', '1226,1130 1226,1166'].forEach(s => c.line(s, bd));
  const L = (x, y, s, w) => c.text(x, y, s, w, 'fill-[#777] stroke-[#f1f1f1] [stroke-width:2px] [paint-order:stroke] text-[17px]');
  const pins = [[310, 801], [309, 879], [323, 905], [335, 889], [345, 908], [371, 862], [410, 823], [429, 845], [458, 832], [478, 856], [478, 856], [397, 911], [403, 931], [441, 908], [454, 895], [452, 941], [456, 960], [390, 999], [733, 766], [733, 768], [750, 756], [764, 780], [742, 788], [775, 793], [722, 857], [742, 852], [777, 848], [834, 853], [913, 962], [926, 962], [1002, 941], [987, 1001], [1139, 860], [1173, 880], [1220, 892], [1220, 892], [1095, 927], [1091, 963], [1156, 924], [1156, 925], [1155, 964], [1128, 975], [1130, 980], [1154, 1028], [1084, 1033], [1088, 1098], [1096, 1106], [1104, 1148], [1259, 1321]];
  L(397, 760, 'NORTH', 59); L(397, 811, 'AMERICA', 75); L(1090, 702, 'ASIA', 37); L(805, 750, 'EUROPE', 64); L(827, 1090, 'AFRICA', 58); L(542, 1206, 'SOUTH', 56); L(542, 1256, 'AMERICA', 75); L(1200, 1268, 'AUSTRALIA', 89);
  [[231, 1044, 'Pacific', 'Ocean'], [594, 975, 'Atlantic', 'Ocean'], [1022, 1214, 'Indian', 'Ocean'], [1480, 1044, 'Pacific', 'Ocean']].forEach(([x, y, a, b]) => { const k = 'fill-[#777] italic text-[9px]'; c.text(x, y, a, a.length > 7 ? 34 : 28.5, k); c.text(x, y + 25, b, 27, k); });
  pins.forEach(([x, y]) => c.circ(x, y, 7.4, 'fill-[#6e6e6e]/55 stroke-[#555]/70 [stroke-width:1px]'));
  return c.svg('overflow-hidden mt-[16px]');
})();

/* ---------- data table ---------- */
const COLS = 'grid grid-cols-[124.5px_152px_148px_150px_145px_168px]';
const tree = open => `<svg width="7" height="8" viewBox="0 0 7 8" class="fill-none stroke-[#8a8a8a] [stroke-width:.8px]"><rect x=".5" y=".5" width="6" height="7"/><path d="M2 4H5${open ? '' : 'M3.5 2.4V5.6'}"/></svg>`;
const BW = { a: ['w-[95px]', 'w-[95px]', 'w-[93px]', 'w-[93px]', 'w-[104px]'], b: ['w-[78px]', 'w-[80px]', 'w-[77px]', 'w-[77px]', 'w-[91px]'], c: ['w-[68px]', 'w-[71px]', 'w-[72px]', 'w-[70px]', 'w-[83px]'] };
const blob = (k, i) => `<div class="flex h-[15px] justify-end ${i == 4 ? 'pr-[17px]' : 'pr-[6px]'}"><div class="h-[15px] ${BW[k][i]} blur-[4px] ${k == 'a' ? 'bg-[linear-gradient(90deg,#dedede,#d8d8d8_40%,#dedede_60%,#d6d6d6)]' : i == 4 ? 'bg-[linear-gradient(90deg,#cecece,#c8c8c8_40%,#d0d0d0_60%,#c8c8c8)]' : 'bg-[linear-gradient(90deg,#ebebeb,#e5e5e5_40%,#e9e9e9_60%,#e3e3e3)]'}"></div></div>`;
function row(name, i) {
  const strong = name == 'UNITED STATES' || name == 'Total', stripe = !strong && i % 2 == 1, k = strong ? 'a' : name == 'BD' ? 'c' : 'b';
  const label = name == 'UNITED STATES' ? `<div class="pl-[6px] pb-[5px]">${tree(true)}</div><div class="ml-[10.5px] font-bold">${t(name)}</div>`
    : name == 'Total' ? `<div class="ml-[23.5px] font-bold">${t(name)}</div>` : `<div class="pl-[16px] pb-[5px]">${tree(false)}</div><div class="ml-[10px]">${t(name)}</div>`;
  return `<div class="flex h-[19.35px]"><div class="h-full w-[124.5px] border-r border-[#8a8a8a]"><div class="flex h-[18.7px] items-center text-[12px] text-[#3a3a3a] ${stripe ? 'bg-[#ececec]' : ''}">${label}</div></div>
    <div class="h-[18.7px] w-[763px] ${stripe ? 'bg-[#ebebeb] py-[2.4px] pl-[8px]' : 'pt-[2px] pl-[8px]'}"><div class="${stripe ? 'bg-[#f7f7f7]' : ''} -ml-px grid h-[14px] grid-cols-[144px_148px_150px_145px_168px] overflow-hidden">${[0, 1, 2, 3, 4].map(j => blob(k, j)).join('')}</div></div></div>`;
}
const table = (size, title, names, head) => panel(size, title, `
  <div class="${COLS} ${head} items-end border-b-[1.5px] border-[#8a8a8a] text-[12.5px] text-[#555]">
    <div class="flex h-[24px] flex-col items-start pl-[5px] leading-[16px]">${t('Company')}<svg width="8" height="5" viewBox="0 0 8 5" class="mt-[-1px]"><path d="M0 5 4 0 8 5z"/></svg></div>
    <div class="h-[24px] pl-[53px] leading-[16px]">1</div><div class="h-[24px] pl-[49px] leading-[16px]">2</div><div class="h-[24px] pl-[51px] leading-[16px]">3</div><div class="h-[24px] pl-[46px] leading-[16px]">4</div><div class="h-[24px] pl-[48.5px] leading-[16px] font-bold text-black">${t('Total')}</div>
  </div><div class="pt-[1px]">${names.map(row).join('')}</div>`);
const FULL = ['UNITED STATES', 'BA', 'BD', 'LA', 'MW', 'NE', 'NW', 'SD', 'SE', 'TE', 'Total'], SHORT = FULL.slice(0, 3);
const HA = 'h-[41px]', HB = 'h-[31px]';

/* ---------- pages ---------- */
const gap = 'mt-[12px]';
const allFields = [field('Location', sel('All', 139)), field('Fuel Type', sel('All', 139))];
const viewRange = `<div class="flex items-center gap-[7.5px] text-[12px]">${t('View Range:')}${sel('Quarterly', 154)}</div>`;
const lastRange = `<div class="flex items-center gap-[6px] text-[12px]">${t('Range:')}${range('5', 'Months')}</div>`;
const planBar = bar('Planning (Daily/Weekly)', [...allFields, field('View Range', sel('Weekly', 163))]);
const analysisBar = bar('Analysis', [field('Locations', sel('BA, BD', 117)), field('Fuel Type', sel('All', 139)), field('View Range', sel('Last Month 01/01 - 01/31', 175))]);
const planRow = mt => `<div class="flex gap-[12px] ${mt}">${panel('w-[540px] h-[258px]', 'Forecast Weekly Data - Next 4 Weeks', weekly(516, 210, -4.5, 198.4, true))}${panel('w-[360px] h-[258px]', 'Graph 2 Title', donutA)}</div>`;
const wk = 'Actual Gas Volume and Forecast Gas Volume by Week';

const mvp1 = card('h-[529px]', bar('Forecasting Summary', allFields) + panel('h-[426px]', wk, weekly(887.5, 380, 32.5, 347.5), viewRange));
const mvp2 = card('h-[672.5px]', planBar + planRow('') + table(gap + ' h-[300px]', 'Data Table Title', FULL, HA));
const mvp3 = card('h-[529px]', analysisBar + `<div class="flex gap-[12px]">${panel('w-[450px] h-[258px]', 'Actual and Forecasted Gas Volume, BA', analysisPair(0))}${panel('w-[450px] h-[258px] [&>*]:translate-x-[2.5px]', 'Actual and Forecasted Gas Volume, BD', analysisPair(1))}</div>` + table(gap + ' h-[156px]', 'Data Table Title', SHORT, HA));

const o1 = card('h-[637px]', bar('Forecasting Summary', allFields) + kpis + panel(gap + ' h-[437px]', wk, weekly(887.5, 390, 19.5, 368.5), viewRange));
const o2 = card('h-[769px]', planBar + planRow('') + `<div class="${gap}">${kpis}</div>` + table(gap + ' h-[300px]', 'Data Table Title', FULL, HA));
const o2b = card('h-[769px]', planBar + kpis + planRow(gap) + table(gap + ' h-[300px]', 'Data Table Title', FULL, HA), 'mt-[55.5px]');
const ab = 'Actual and Forecasted Gas Volume, BA & BD';
const o3 = card('h-[637px]', analysisBar + panel('h-[366px]', ab, waves(888, 68, 363.5, 2.24, 1.6)) + table(gap + ' h-[156px]', 'Data Table Title', SHORT, HA));
const o3b = card('h-[637px]', analysisBar + `<div class="flex gap-[12px]">${panel('w-[720px] h-[366px]', ab, waves(696, 69.8, 364.6, 2.484, 2.04))}<div class="flex h-[366px] w-[180px] flex-col justify-between">${['108K', '$2.25M', '89.93%', '541K Gal'].map(v => kpi(v, 'h-[83.3px] [&]:pt-[19px]')).join('')}</div></div>` + table(gap + ' h-[156px]', 'Data Table Title', SHORT, HA), 'mt-[55.5px]');

const g3 = 'gap-[7.5px]', AF = legend([['dark', 'Actual'], ['dot', 'Forecast']]);
const sumBar = g => bar('Forecasting Summary', [field('Graph', sel(g, 139)), ...allFields], g3);
const p1 = card('h-[529px]', sumBar('Forecast') + panel('h-[426px]', 'Actual Gas Volume and Forecast Gas Volume', forecastBig, lastRange, AF));
const p1b = card('h-[529px]', sumBar('Map') + panel('h-[426px]', 'Volume Sales by Location and Fuel Type', world, lastRange, legend([['light', 'Good Threshold'], ['dark', 'Medium Threshold'], ['black', 'Hard Threshold']])), 'mt-[55.5px]');
const planBar2 = bar('Planning', [...allFields, field('Range', range('4', 'Weeks'))], g3);
const anBar2 = bar('Analysis', [field('Location', sel('BA, BD', 139)), field('Fuel Type', sel('All', 139)), field('Range', range('4', 'Weeks'))], g3);
const fuel = panel('w-[360px] h-[258px]', 'Volume Sales by Fuel Type', donutB);
const loc = table(gap + ' h-[290px]', 'Volume Sales by Location', FULL, HB);
const p2 = card('h-[660px]', planBar2 + `<div class="flex gap-[12px]">${panel('w-[540px] h-[258px]', 'Forecast Sales Data', planLines, '', AF)}${fuel}</div>` + loc);
const p2b = card('h-[660.5px]', planBar2 + `<div class="flex gap-[12px]">${panel('w-[540px] h-[258px] translate-x-[1.5px] translate-y-[3px] [&>*]:-translate-x-[1.5px] [&>*]:-translate-y-[3px]', 'Forecast Sales Data', planBars, '', legend([['mid', 'Actual'], ['err', 'Forecast']]))}${fuel}</div>` + loc, 'mt-[56.5px]');
const p3 = card('h-[517px]', anBar2 + `<div class="flex gap-[12px]">${panel('w-[450px] h-[258px]', 'Actual and Forecasted Gas Volume, BA', pair2(0), '', AF)}${panel('w-[450px] h-[258px]', 'Actual and Forecasted Gas Volume, BD', pair2(1), '', AF)}</div>` + table(gap + ' h-[144px]', 'Data Table Title', SHORT, HB));
const p3b = card('h-[625px]', anBar2 + panel('h-[366px]', 'Actual and Forecasted Gas Volume', quad, '', legend([['dark', 'BA Actual'], ['ddot', 'BA Forecast'], ['mid', 'BD Actual'], ['dot', 'BD Forecast']])) + table(gap + ' h-[144px]', 'Data Table Title', SHORT, HB), 'mt-[55.5px]');

const group = (title, cols) => `<section class="w-[2985px] shrink-0"><h1 class="mb-[55px] flex h-[72px] items-center justify-center rounded-[4px] bg-[#eee] font-['Inter'] text-[28px] font-bold text-[#2b2b2b]">${t(title)}</h1>
  <div class="flex justify-between">${cols.map(c => `<div class="flex w-[960px] flex-col">${c}</div>`).join('')}</div></section>`;
const board = document.getElementById('board');
board.innerHTML = `<div class="flex h-[1084px]">${group("MVP's // Iteration 1", [mvp1, mvp2, mvp3])}</div>
  <div class="flex gap-[206.6px]">${group('Other pages // Iteration 1', [o1, o2 + o2b, o3 + o3b])}${group('Other pages // Iteration 2', [p1 + p1b, p2 + p2b, p3 + p3b])}</div>`;

// Track each label to its set width, once the styles are in force
function fit() {
  if (board.offsetWidth !== 6720) return requestAnimationFrame(fit);
  const k = board.getBoundingClientRect().width / 6720;
  const all = [...document.querySelectorAll('[data-w]')];
  const widths = all.map(e => e.getBoundingClientRect().width / k);
  all.forEach((e, i) => { e.style.letterSpacing = ((+e.dataset.w - widths[i]) / e.textContent.length).toFixed(3) + 'px'; });
}
fit();
</script>
</body>
</html>
